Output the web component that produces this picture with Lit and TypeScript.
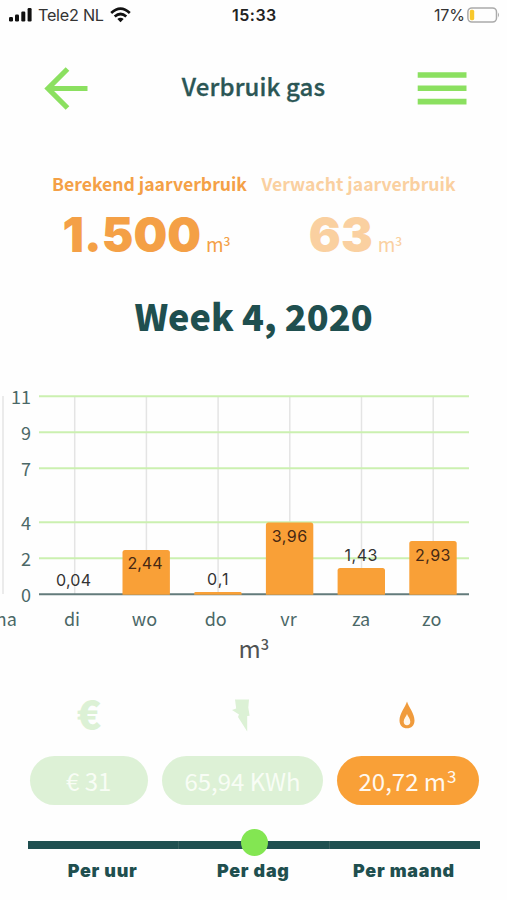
import { LitElement, html, svg, css } from "lit";
import { customElement, property } from "lit/decorators.js";

interface Day {
  label: string;
  labelX: number;
  value: number | null;
  text: string;
  textX: number;
  textY: number;
  textWidth: number;
}

const BASE = 214;
const UNIT = 18;
const FIRST = 3;
const STEP = 71.7;

@customElement("status-bar")
class StatusBar extends LitElement {
  static styles = css`
    :host { display: flex; align-items: center; height: 30px; font: 400 16px/30px Inter, sans-serif; color: #333; }
    .signal { margin-left: 9px; width: 23px; height: 14px; }
    .carrier { margin-left: 6px; width: 67px; white-space: nowrap; font-size: 16.2px; letter-spacing: -0.25px; }
    .wifi { margin-left: 5px; width: 21px; height: 16px; }
    .time { margin-left: 101px; width: 202px; font-weight: 600; color: #222; letter-spacing: 0.5px; }
    .percent { width: 31px; white-space: nowrap; letter-spacing: -0.2px; }
    .battery { margin-left: 2px; width: 33px; height: 16px; }
  `;
  render() {
    return html`
      <svg class="signal" viewBox="0 0 23 14">
        <g fill="#111">
          <rect x="0" y="9" width="4" height="4.5" rx="1.2" />
          <rect x="6" y="6.5" width="4" height="7" rx="1.2" />
          <rect x="12.3" y="3.5" width="4" height="10" rx="1.2" />
          <rect x="18.6" y="0" width="4" height="13.5" rx="1.2" />
        </g>
      </svg>
      <span class="carrier">Tele2 NL</span>
      <svg class="wifi" viewBox="0 0 21 16">
        <g fill="none" stroke="#111" stroke-width="2.7">
          <path d="M1.2 6 Q10.5 -2.6 19.8 6" />
          <path d="M4.7 9.6 Q10.5 4.4 16.3 9.6" />
        </g>
        <path d="M7.3 12 Q10.5 9.6 13.7 12 L10.5 15.3 Z" fill="#111" />
      </svg>
      <span class="time">15:33</span>
      <span class="percent">17%</span>
      <svg class="battery" viewBox="0 0 33 16">
        <rect x="0.9" y="0.9" width="28.6" height="14.2" rx="4" fill="none" stroke="#aaa" stroke-width="1.5" />
        <rect x="2.8" y="2.8" width="4.4" height="10.4" rx="1.6" fill="#f8c82c" />
        <path d="M31 5.6 Q33 8 31 10.4 Z" fill="#aaa" />
      </svg>
    `;
  }
}

@customElement("usage-chart")
class UsageChart extends LitElement {
  @property({ attribute: false }) days: Day[] = [];
  static styles = css`
    :host { display: block; height: 290px; }
    .plot { display: block; width: 507px; height: 290px; }
    .axis { font: 400 18px "Noto Sans CJK SC", sans-serif; fill: #4b6867; }
    .value { font: 400 16px Inter, sans-serif; fill: #333; }
    .inside { fill: #472813; }
    .unit { font: 400 24px "Noto Sans CJK SC", sans-serif; fill: #505353; }
    .raised { font-size: 14.5px; font-weight: 500; }
  `;
  render() {
    const ticks = [11, 9, 7, 4, 2, 0];
    return html`
      <svg class="plot" viewBox="0 0 507 290">
        ${this.days.map((_, i) => svg`<line x1=${FIRST + i * STEP} x2=${FIRST + i * STEP} y1="16" y2=${BASE} stroke="#e4e4e4" stroke-width="1.5" />`)}
        ${ticks.map((t) => svg`
          <line x1="39" x2="469" y1=${BASE - t * UNIT + 0.3} y2=${BASE - t * UNIT + 0.3} stroke=${t ? "#cbf0b0" : "#637b7b"} stroke-width="2" />
          <text class="axis" x="31" y=${BASE - t * UNIT + 7.6} text-anchor="end">${t}</text>`)}
        ${this.days.map((d, i) => {
          if (d.value === null) return svg`<text class="axis" x=${d.labelX} y="245.5" text-anchor="middle">${d.label}</text>`;
          const h = d.value * UNIT + 1;
          const x = FIRST + i * STEP - 23.9;
          const r = Math.min(2.5, h / 2);
          return svg`
            ${d.value > 0.05 ? svg`<path fill="#f9a037" d="M${x} ${BASE + 0.8} v${-(h - r)} q0 ${-r} ${r} ${-r} h${47.4 - 2 * r} q${r} 0 ${r} ${r} v${h - r} Z" />` : ""}
            <text class="value ${d.value > 2 ? "inside" : ""}" x=${d.textX} y=${d.textY} textLength=${d.textWidth}>${d.text}</text>
            <text class="axis" x=${d.labelX} y="245.5" text-anchor="middle">${d.label}</text>`;
        })}
        <text class="unit" x="238.5" y="277.5">m<tspan class="raised" dy="-8">3</tspan></text>
      </svg>
    `;
  }
}

@customElement("app-root")
class AppRoot extends LitElement {
  static styles = css`
    :host { display: block; width: 507px; height: 900px; overflow: hidden; background: #fefefe; font-family: "Noto Sans CJK SC", sans-serif; color: #1f4f4f; }
    .header { display: flex; align-items: center; height: 50px; margin-top: 33px; padding: 0 40px 0 44px; }
    .back { width: 44px; height: 44px; }
    .title { flex: 1; margin: -5px 0 0 2px; text-align: center; font-size: 24px; line-height: 30px; font-weight: 500; letter-spacing: 0.12px; color: #2b5655; -webkit-text-stroke: 0.3px #2b5655; }
    .menu { width: 50px; height: 34px; }
    .totals { display: flex; height: 100px; margin-top: 57px; padding-left: 45px; }
    .total { width: 209px; text-align: center; color: #f4a046; white-space: nowrap; }
    .total.faded { color: #fad0a0; }
    .caption { font-size: 17.6px; line-height: 28px; font-weight: 700; }
    .amount { display: flex; justify-content: center; align-items: baseline; gap: 5px; margin-top: 7px; margin-right: 6px; line-height: 60px; }
    .number { font: 900 47.5px/60px Inter, sans-serif; }
    .small { font-size: 19px; }
    .cubed { font-size: 12px; font-weight: 500; line-height: 0; vertical-align: 6.5px; }
    .week { margin: 15px 0 0; height: 60px; line-height: 60px; text-align: center; font-size: 36px; font-weight: 900; }
    usage-chart { margin-top: 35px; }
    .icons { display: flex; align-items: center; height: 50px; margin-top: 20px; }
    .slot { display: flex; justify-content: center; align-items: center; color: #dcf1d5; }
    .euro { width: 118px; margin-left: 30px; margin-top: -7px; font-size: 40px; font-weight: 900; line-height: 50px; }
    .power { width: 161px; margin-left: 12px; }
    .gas { width: 142px; margin-left: 15px; }
    .pills { display: flex; margin-top: 16px; padding-left: 29.5px; gap: 14px; }
    .pill { box-sizing: border-box; height: 48.5px; border-radius: 25px; background: #ddf1d6; color: #f8fdf5; text-align: center; font-size: 24px; line-height: 49px; white-space: nowrap; }
    .cost { width: 118.5px; }
    .energy { width: 161px; }
    .volume { width: 142px; margin-left: -0.5px; background: #f9a037; color: #fff8ef; }
    .sup { font-size: 17px; font-weight: 400; line-height: 0; vertical-align: 8px; margin-left: 1px; }
    .track { position: relative; display: grid; grid-template-columns: repeat(3, 1fr); gap: 1px; width: 452px; height: 8px; margin: 36.5px 0 0 28px; background: #37605f; }
    .part { background: #1f4f50; }
    .thumb { position: absolute; left: 212.5px; top: -12.5px; width: 27px; height: 27px; border-radius: 50%; background: #83e652; }
    .periods { display: grid; grid-template-columns: repeat(3, 1fr); width: 452px; margin: 8px 0 0 27.3px; text-align: center; font: 900 17.9px/28px Inter, sans-serif; letter-spacing: 0.75px; }
  `;
  days: Day[] = [
    { label: "ma", labelX: 3.5, value: null, text: "", textX: 0, textY: 0, textWidth: 0 },
    { label: "di", labelX: 72, value: 0.04, text: "0,04", textX: 56, textY: 206, textWidth: 35 },
    { label: "wo", labelX: 144.5, value: 2.44, text: "2,44", textX: 127.5, textY: 188.5, textWidth: 35 },
    { label: "do", labelX: 215.7, value: 0.1, text: "0,1", textX: 207, textY: 205, textWidth: 21.5 },
    { label: "vr", labelX: 288.5, value: 3.96, text: "3,96", textX: 271.7, textY: 162, textWidth: 35.5 },
    { label: "za", labelX: 361, value: 1.43, text: "1,43", textX: 344.5, textY: 180.5, textWidth: 33 },
    { label: "zo", labelX: 431.7, value: 2.93, text: "2,93", textX: 415, textY: 180.5, textWidth: 35.5 },
  ];
  render() {
    return html`
      <status-bar></status-bar>
      <header class="header">
        <svg class="back" viewBox="0 0 44 44"><path d="M23.5 3 L4 22.5 L23.5 42 M3 22.5 H43.5" fill="none" stroke="#8be060" stroke-width="5.2" /></svg>
        <h1 class="title">Verbruik gas</h1>
        <svg class="menu" viewBox="0 0 50 34"><path d="M0.7 4 H49.5 M0.7 17.3 H49.5 M0.7 30.6 H49.5" stroke="#8be060" stroke-width="5.6" /></svg>
      </header>
      <section class="totals">
        <div class="total">
          <div class="caption">Berekend jaarverbruik</div>
          <div class="amount"><span class="number">1.500</span><span class="small">m<span class="cubed">3</span></span></div>
        </div>
        <div class="total faded">
          <div class="caption">Verwacht jaarverbruik</div>
          <div class="amount"><span class="number">63</span><span class="small">m<span class="cubed">3</span></span></div>
        </div>
      </section>
      <h2 class="week">Week 4, 2020</h2>
      <usage-chart .days=${this.days}></usage-chart>
      <div class="icons">
        <div class="slot euro">€</div>
        <div class="slot power">
          <svg width="18" height="33" viewBox="0 0 18 33"><path d="M3 0.5 H17 L16.3 8.5 L17.6 16.8 L15.2 17 V32.5 L6 18 L7 15.5 L0 11 L4.2 9.5 Z" fill="#dcf1d5" /></svg>
        </div>
        <div class="slot gas">
          <svg width="16" height="28" viewBox="0 0 16 28"><path d="M8 0.5 C9.5 6 15.5 12 15.5 19.5 C15.5 24.5 12.3 27.3 8 27.3 C3.7 27.3 0.5 24.5 0.5 19.5 C0.5 12 6.5 6 8 0.5 Z" fill="#f09b3c" /><path d="M8 13 C8.7 15.5 11.3 17.5 11.3 20.5 C11.3 23 10 24.2 8 24.2 C6 24.2 4.7 23 4.7 20.5 C4.7 17.5 7.3 15.5 8 13 Z" fill="#fff6ea" /></svg>
        </div>
      </div>
      <div class="pills">
        <div class="pill cost">€ 31</div>
        <div class="pill energy">65,94 KWh</div>
        <div class="pill volume">20,72 m<span class="sup">3</span></div>
      </div>
      <div class="track">
        <div class="part"></div><div class="part"></div><div class="part"></div>
        <div class="thumb"></div>
      </div>
      <div class="periods"><span>Per uur</span><span>Per dag</span><span>Per maand</span></div>
    `;
  }
}
